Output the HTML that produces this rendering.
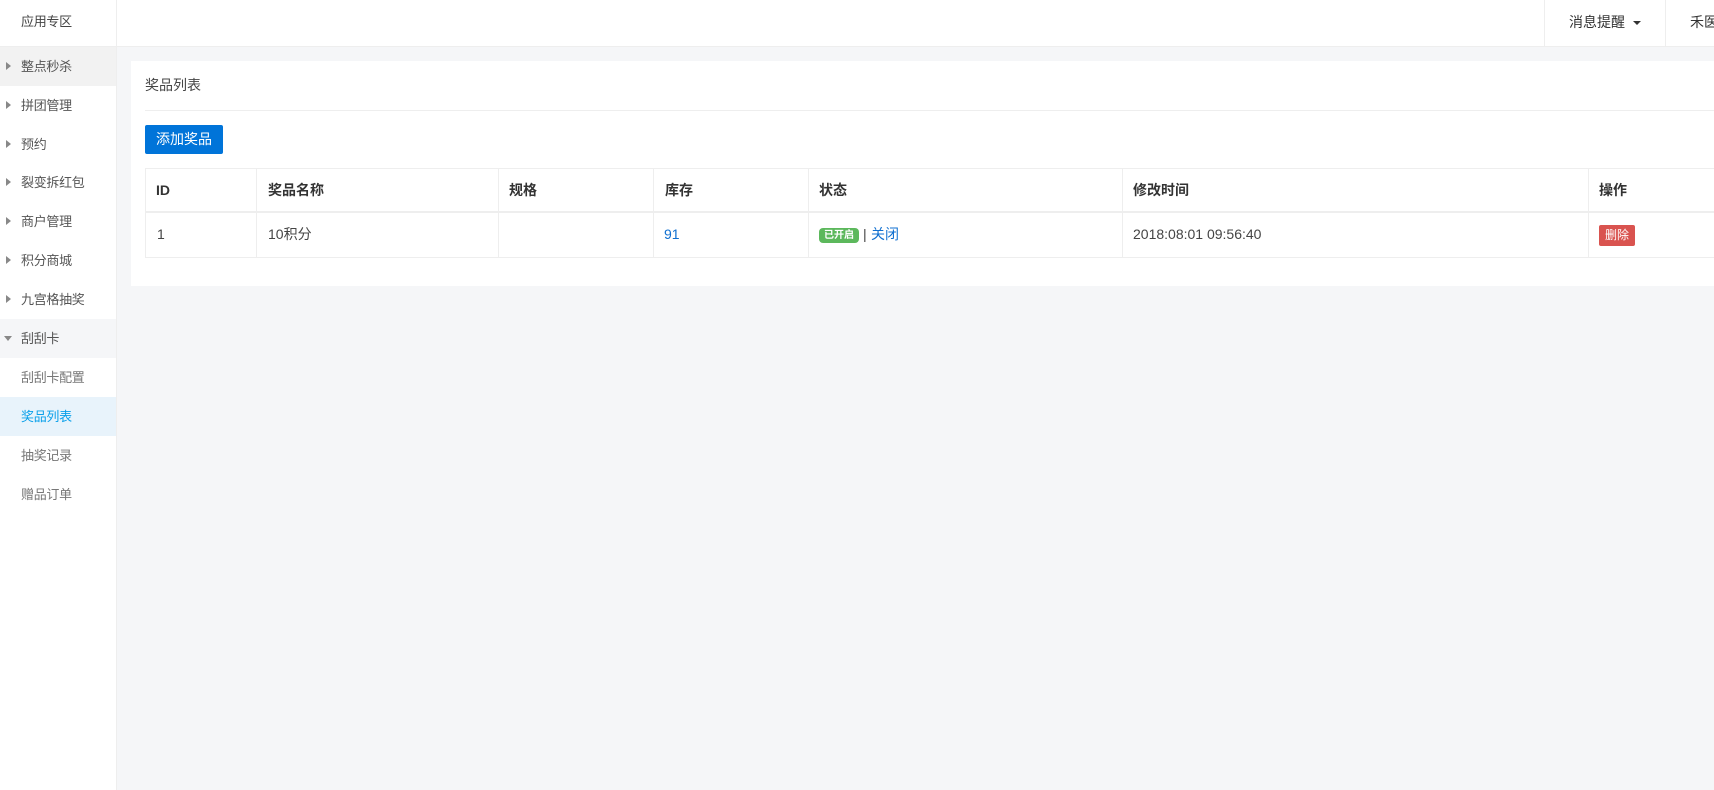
<!DOCTYPE html>
<html lang="zh-CN">
<head>
<meta charset="utf-8">
<title>奖品列表</title>
<style>
html,body{margin:0;padding:0;width:1714px;height:790px;overflow:hidden;background:#f5f6f8;}
body{position:relative;font-family:"Liberation Sans","Noto Sans CJK SC",sans-serif;font-size:14px;color:#333;}
div,span,a{position:absolute;white-space:nowrap;}
.b{background:#eeeeee;}
.m{left:0;width:116px;height:39px;line-height:39px;background:#fff;}
.m span{left:21px;top:0;font-size:13px;color:#555;letter-spacing:-0.3px;}
.m i{position:absolute;left:6px;top:15px;width:0;height:0;border-style:solid;border-width:4px 0 4px 5px;border-color:transparent transparent transparent #888;}
.s span{color:#777;}
.th{top:168px;height:43px;line-height:44px;font-weight:bold;color:#333;}
.td{top:213px;height:44px;line-height:43px;color:#444;}
</style>
</head>
<body>
<!-- top bar -->
<div style="left:0;top:0;width:1714px;height:46px;background:#fff"></div>
<div class="b" style="left:0;top:46px;width:1714px;height:1px"></div>
<div style="left:21px;top:0;line-height:44px;font-size:13px;color:#444;letter-spacing:-0.3px">应用专区</div>
<div class="b" style="left:116px;top:0;width:1px;height:46px"></div>
<div class="b" style="left:1544px;top:0;width:1px;height:46px"></div>
<div class="b" style="left:1665px;top:0;width:1px;height:46px"></div>
<div style="left:1569px;top:0;line-height:44px;color:#333">消息提醒</div>
<div style="left:1633px;top:21px;width:0;height:0;border-style:solid;border-width:4px 4px 0 4px;border-color:#333 transparent transparent transparent"></div>
<div style="left:1690px;top:0;line-height:44px;color:#333">禾医</div>

<!-- sidebar -->
<div style="left:0;top:47px;width:116px;height:743px;background:#fff"></div>
<div class="b" style="left:116px;top:47px;width:1px;height:743px"></div>
<div class="m" style="top:47px;background:#f2f2f2"><i></i><span>整点秒杀</span></div>
<div class="m" style="top:86px"><i></i><span>拼团管理</span></div>
<div class="m" style="top:125px"><i></i><span>预约</span></div>
<div class="m" style="top:163px"><i></i><span>裂变拆红包</span></div>
<div class="m" style="top:202px"><i></i><span>商户管理</span></div>
<div class="m" style="top:241px"><i></i><span>积分商城</span></div>
<div class="m" style="top:280px"><i></i><span>九宫格抽奖</span></div>
<div class="m" style="top:319px;height:40px;background:#f5f6f8"><i style="left:4px;top:17px;border-width:5px 4px 0 4px;border-color:#888 transparent transparent transparent"></i><span>刮刮卡</span></div>
<div class="m s" style="top:358px"><span>刮刮卡配置</span></div>
<div class="m s" style="top:397px;background:#e8f3fb"><span style="color:#0aa0ea">奖品列表</span></div>
<div class="m s" style="top:436px"><span>抽奖记录</span></div>
<div class="m s" style="top:475px"><span>赠品订单</span></div>

<!-- panel -->
<div style="left:131px;top:61px;width:1583px;height:225px;background:#fff"></div>
<div style="left:145px;top:61px;line-height:49px;color:#444">奖品列表</div>
<div class="b" style="left:145px;top:110px;width:1569px;height:1px"></div>
<div style="left:145px;top:125px;width:78px;height:29px;line-height:28px;background:#0074d9;border-radius:2px;color:#fff;text-align:center">添加奖品</div>

<!-- table lines -->
<div class="b" style="left:145px;top:168px;width:1569px;height:1px"></div>
<div class="b" style="left:145px;top:211px;width:1569px;height:2px"></div>
<div class="b" style="left:145px;top:257px;width:1569px;height:1px"></div>
<div class="b" style="left:145px;top:168px;width:1px;height:90px"></div>
<div class="b" style="left:256px;top:168px;width:1px;height:90px"></div>
<div class="b" style="left:498px;top:168px;width:1px;height:90px"></div>
<div class="b" style="left:653px;top:168px;width:1px;height:90px"></div>
<div class="b" style="left:808px;top:168px;width:1px;height:90px"></div>
<div class="b" style="left:1122px;top:168px;width:1px;height:90px"></div>
<div class="b" style="left:1588px;top:168px;width:1px;height:90px"></div>

<!-- head -->
<div class="th" style="left:156px">ID</div>
<div class="th" style="left:268px">奖品名称</div>
<div class="th" style="left:509px">规格</div>
<div class="th" style="left:665px">库存</div>
<div class="th" style="left:819px">状态</div>
<div class="th" style="left:1133px">修改时间</div>
<div class="th" style="left:1599px">操作</div>

<!-- row -->
<div class="td" style="left:157px">1</div>
<div class="td" style="left:268px">10积分</div>
<a class="td" style="left:664px;color:#0f6fd0">91</a>
<div style="left:819px;top:228px;width:40px;height:15px;line-height:16px;background:#5cb85c;border-radius:4px;color:#fff;font-size:10px;font-weight:bold;text-align:center">已开启</div>
<div class="td" style="left:863px">|</div>
<a class="td" style="left:871px;color:#0f6fd0">关闭</a>
<div class="td" style="left:1133px">2018:08:01 09:56:40</div>
<div style="left:1599px;top:225px;width:36px;height:21px;line-height:21px;background:#d9534f;border-radius:2px;color:#fff;font-size:12px;text-align:center">删除</div>
</body>
</html>
